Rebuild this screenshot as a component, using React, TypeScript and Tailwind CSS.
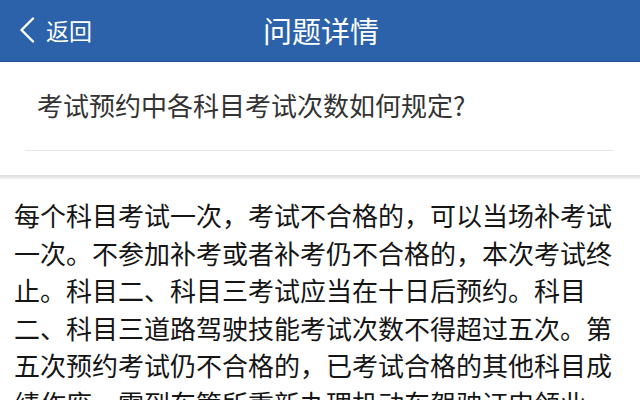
const lines = [
  "每个科目考试一次，考试不合格的，可以当场补考试",
  "一次。不参加补考或者补考仍不合格的，本次考试终",
  "止。科目二、科目三考试应当在十日后预约。科目",
  "二、科目三道路驾驶技能考试次数不得超过五次。第",
  "五次预约考试仍不合格的，已考试合格的其他科目成",
  "绩作废，需到车管所重新办理机动车驾驶证申领业",
];

export default function App() {
  return (
    <main
      className="w-[640px] h-[400px] overflow-hidden bg-white"
      style={{ fontFamily: '"Noto Sans CJK SC", "Noto Sans", sans-serif' }}
    >
      {/* 顶部导航 */}
      <header className="relative h-[62px] bg-[#2b62a9] border-b border-[#22528f] flex items-center justify-center">
        <button className="absolute left-[19px] top-0 h-full flex items-center text-white">
          <svg width="16" height="26" viewBox="0 0 16 26" fill="none" className="mb-[2px]">
            <polyline
              points="14,1.5 2.5,13 14,24.5"
              stroke="white"
              strokeWidth="2.4"
              strokeLinecap="round"
              strokeLinejoin="round"
            />
          </svg>
          <span className="ml-[11px] text-[23px] leading-none">返回</span>
        </button>
        <h1 className="text-[29px] leading-none text-white pl-[2px]">问题详情</h1>
      </header>

      {/* 问题标题 */}
      <section className="bg-white">
        <div className="h-[88px] flex items-center px-[37px] pb-[2px]">
          <p className="text-[26px] leading-none text-[#333333] whitespace-nowrap">
            考试预约中各科目考试次数如何规定?
          </p>
        </div>
        <div className="ml-[25px] mr-[27px] h-px bg-[#e6e6e6]" />
        <div className="h-[24px]" />
      </section>
      <div className="h-[4px] bg-gradient-to-b from-[#dcdcdc] to-[#f4f4f4]" />

      {/* 回答正文 */}
      <article className="pt-[17px] px-[14px] text-[26px] leading-[37.5px] text-[#151515]">
        {lines.map((l) => (
          <div key={l} className="whitespace-nowrap">
            {l}
          </div>
        ))}
      </article>
    </main>
  );
}
